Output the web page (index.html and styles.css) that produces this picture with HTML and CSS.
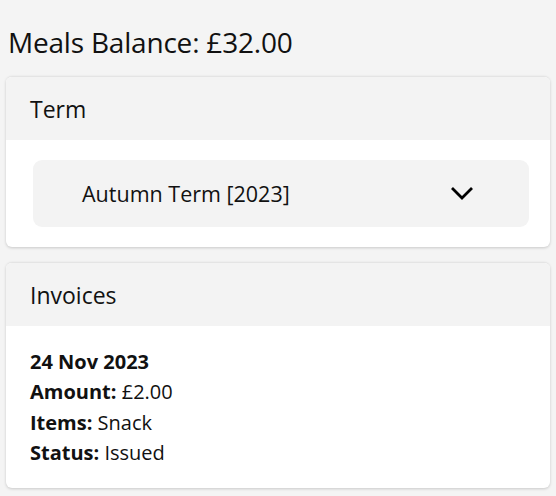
FILE: index.html
```html
<!DOCTYPE html>
<html>
<head>
<meta charset="utf-8">
<link rel="stylesheet" href="styles.css">
</head>
<body>
<div class="page">
  <h1 class="balance">Meals Balance: £32.00</h1>
  <section class="card">
    <div class="card-header">Term</div>
    <div class="card-body term-body">
      <div class="select">
        <span class="select-text">Autumn Term [2023]</span>
        <svg class="chevron" width="24" height="15" viewBox="0 0 24 15"><path d="M2 2 L12 12 L22 2" fill="none" stroke="#000" stroke-width="2.8"/></svg>
      </div>
    </div>
  </section>
  <section class="card">
    <div class="card-header">Invoices</div>
    <div class="card-body invoice-body">
      <div class="date">24 Nov 2023</div>
      <div><b>Amount:</b> £2.00</div>
      <div><b>Items:</b> Snack</div>
      <div><b>Status:</b> Issued</div>
    </div>
  </section>
</div>
</body>
</html>
```

FILE: styles.css
```css
html, body {
  margin: 0;
  padding: 0;
  background: #f4f4f4;
}
body {
  font-family: "Open Sans", "Noto Sans", sans-serif;
  color: #111;
}
.page {
  padding: 20px 6px 9px 6px;
  display: flex;
  flex-direction: column;
}
.balance {
  margin: 0 0 0 2px;
  font-weight: 400;
  font-size: 28px;
  line-height: 44px;
  letter-spacing: -0.2px;
}
.card {
  background: #fff;
  border-radius: 6px;
  overflow: hidden;
  border-top: 1px solid #e4e4e4;
  box-shadow: 0 1px 3px rgba(0,0,0,0.18);
  margin-top: 12px;
}
.card + .card {
  margin-top: 15px;
}
.card-header {
  background: #f3f3f3;
  height: 63px;
  display: flex;
  align-items: center;
  padding-left: 24px;
  font-size: 23px;
}
.term-body {
  padding: 20px 21px 20px 27px;
}
.select {
  background: #f3f3f3;
  border-radius: 9px;
  height: 67px;
  display: flex;
  align-items: center;
  justify-content: space-between;
  padding: 0 55px 0 49px;
}
.select-text {
  font-size: 21.5px;
}
.invoice-body {
  padding: 21px 24px 20px 24px;
  font-size: 20px;
  line-height: 30.3px;
}
.date {
  font-weight: 700;
}
b {
  font-weight: 700;
}
```
